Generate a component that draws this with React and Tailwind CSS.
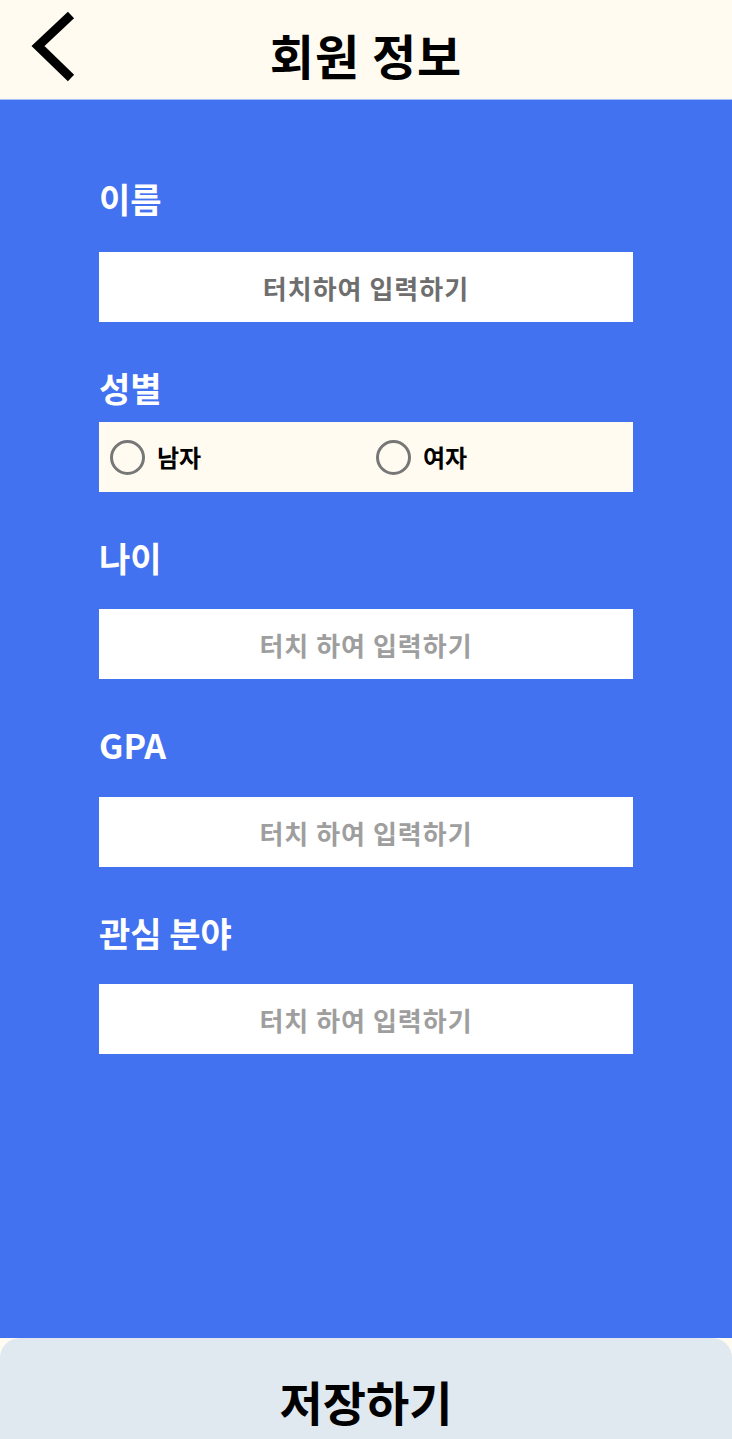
import React from "react";

const FONT = { fontFamily: '"Noto Sans CJK KR", "Noto Sans", sans-serif' };

function Label({ children, className = "" }) {
  return (
    <div className={`h-[40px] flex items-center text-[34px] font-bold text-white leading-none ${className}`}>
      {children}
    </div>
  );
}

function Field({ text, color }) {
  return (
    <div className={`h-[70px] bg-white flex items-center justify-center text-[26px] font-bold tracking-[1px] ${color}`}>
      {text}
    </div>
  );
}

function Radio({ label }) {
  return (
    <div className="flex items-center gap-[12px]">
      <div className="w-[35px] h-[35px] rounded-full border-[3px] border-[#777777]" />
      <span className="text-[24px] font-bold text-black leading-none">{label}</span>
    </div>
  );
}

export default function App() {
  return (
    <div className="w-[732px] h-[1439px] flex flex-col bg-[#fffbf0]" style={FONT}>
      <header className="h-[100px] shrink-0 relative flex items-center justify-center pt-[8px] bg-[#fffbf0] border-b border-[#aabff6]">
        <svg className="absolute left-0 top-0" width="100" height="99" viewBox="0 0 100 99">
          <path d="M71 15 L38 46 L71 78" fill="none" stroke="#000" strokeWidth="9" strokeLinejoin="miter" />
        </svg>
        <h1 className="text-[48px] font-bold text-black leading-none tracking-[1px]">회원 정보</h1>
      </header>

      <main className="flex-1 bg-[#4372f0] pt-[79px] px-[99px]">
        <Label>이름</Label>
        <div className="mt-[33px]">
          <Field text="터치하여 입력하기" color="text-[#6e6e6e]" />
        </div>

        <Label className="mt-[46px]">성별</Label>
        <div className="mt-[14px] h-[70px] bg-[#fffbf0] grid grid-cols-2 items-center">
          <div className="pl-[11px]">
            <Radio label="남자" />
          </div>
          <div className="pl-[10px]">
            <Radio label="여자" />
          </div>
        </div>

        <Label className="mt-[46px]">나이</Label>
        <div className="mt-[31px]">
          <Field text="터치 하여 입력하기" color="text-[#9e9e9e]" />
        </div>

        <Label className="mt-[46px]">GPA</Label>
        <div className="mt-[32px]">
          <Field text="터치 하여 입력하기" color="text-[#9e9e9e]" />
        </div>

        <Label className="mt-[46px]">관심 분야</Label>
        <div className="mt-[31px]">
          <Field text="터치 하여 입력하기" color="text-[#9e9e9e]" />
        </div>
      </main>

      <button className="h-[101px] shrink-0 bg-[#e0e8f0] rounded-t-[20px] flex items-center justify-center pt-[24px]">
        <span className="text-[47px] font-bold text-black leading-none">저장하기</span>
      </button>
    </div>
  );
}
